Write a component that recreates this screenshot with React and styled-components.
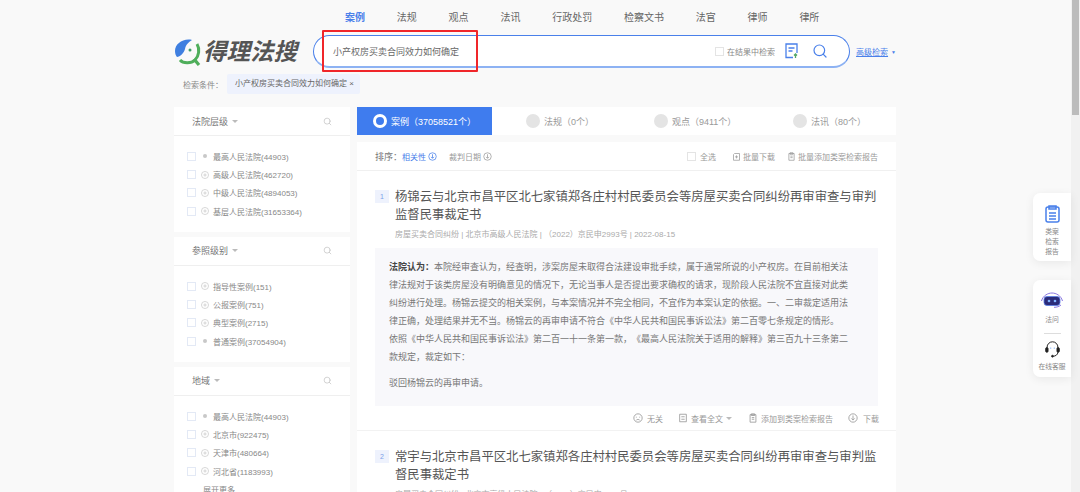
import React from "react";
import styled, { createGlobalStyle } from "styled-components";
import { Search } from "lucide-react";

const Global = createGlobalStyle`
  html, body {
    margin: 0;
    height: 492px;
    overflow: hidden;
    background: #f9f9f9;
    font-family: "Liberation Sans", "Noto Sans CJK SC", sans-serif;
    color: #666;
    text-spacing-trim: space-all;
  }
`;

const Page = styled.div`
  position: relative;
  width: 1080px;
  height: 492px;
  overflow: hidden;
`;

const Track = styled.div`
  position: absolute;
  right: 0;
  top: 0;
  width: 9px;
  height: 492px;
  background: #f1f1f1;
`;

const Thumb = styled.div`
  width: 7px;
  height: 115px;
  margin-left: 1px;
  background: #bcbcbc;
`;

const Inner = styled.div`
  width: 722px;
  margin-left: 174px;
`;

const Nav = styled.nav`
  display: flex;
  height: 35px;
  padding-left: 171px;
  gap: 31.8px;
  align-items: flex-start;
`;

const NavItem = styled.span`
  font-size: 10px;
  line-height: 36px;
  font-weight: ${(p) => (p.$on ? 700 : 400)};
  color: ${(p) => (p.$on ? "#4a80ea" : "#666")};
`;

const Head = styled.div`
  display: flex;
  align-items: center;
  height: 33px;
`;

const Logo = styled.div`
  display: flex;
  align-items: center;
  gap: 1px;
  width: 139px;
  flex: none;
`;

const LogoText = styled.span`
  font-size: 23.5px;
  line-height: 26px;
  font-weight: 700;
  font-style: italic;
  color: #555;
  white-space: nowrap;
`;

const SearchBar = styled.div`
  display: flex;
  align-items: center;
  box-sizing: border-box;
  width: 538px;
  height: 33px;
  padding: 0 21px 0 19px;
  background: #fff;
  border: 1px solid #4a80ea;
  border-bottom: 2px solid #8db2f3;
  border-radius: 17px;
`;

const Query = styled.span`
  font-size: 9px;
  color: #666;
  flex: 1;
`;

const SmallCheck = styled.i`
  display: block;
  box-sizing: border-box;
  width: 9px;
  height: 9px;
  border: 1px solid ${(p) => p.$c || "#e4e4e4"};
  flex: none;
`;

const InResult = styled.span`
  font-size: 8px;
  color: #888;
  margin: 0 10px 0 3px;
`;

const IconGap = styled.span`
  width: 14px;
`;

const Advanced = styled.a`
  margin-left: 6px;
  font-size: 8px;
  color: #4a80ea;
  text-decoration: underline;
  white-space: nowrap;
`;

const Tiny = styled.span`
  margin-left: 3px;
  font-size: 5px;
  color: #4a80ea;
`;

const Cond = styled.div`
  display: flex;
  align-items: center;
  height: 20px;
  margin-top: 6px;
  padding-left: 9px;
  font-size: 8px;
  color: #888;
`;

const Tag = styled.span`
  margin-left: 4px;
  padding: 0 6px 0 8px;
  height: 20px;
  line-height: 20px;
  background: #eef2fd;
  border-radius: 2px;
  color: #666;
  white-space: nowrap;
`;

const Body = styled.div`
  display: flex;
  gap: 7px;
  margin-top: 13px;
`;

const Side = styled.aside`
  width: 176px;
  flex: none;
`;

const Panel = styled.section`
  background: #fff;
  margin-bottom: 5px;
  padding-bottom: 11.4px;
`;

const PanelHead = styled.div`
  display: flex;
  align-items: center;
  height: 28px;
  padding: 0 18px;
  border-bottom: 1px solid #efefef;
  font-size: 9px;
  color: #777;
`;

const PanelTitle = styled.span`
  flex: 1;
  display: flex;
  align-items: center;
  gap: 4px;
`;

const Caret = styled.i`
  display: inline-block;
  width: 0;
  height: 0;
  border: 3px solid transparent;
  border-top: 3px solid #bbb;
  margin-top: 3px;
`;

const Rows = styled.ul`
  list-style: none;
  margin: 0;
  padding: 11px 0 0 13px;
`;

const Row = styled.li`
  display: flex;
  align-items: center;
  height: 18.4px;
  font-size: 8px;
  color: #888;
  white-space: nowrap;
`;

const Mark = styled.span`
  display: flex;
  align-items: center;
  justify-content: center;
  width: 8px;
  height: 8px;
  margin: 0 4px 0 5px;
  flex: none;
`;

const Dot = styled.i`
  display: block;
  width: 4px;
  height: 4px;
  border-radius: 50%;
  background: #c8c8c8;
`;

const More = styled.div`
  padding: 4px 0 0 29px;
  font-size: 8px;
  color: #888;
`;

const Main = styled.main`
  width: 539px;
  flex: none;
`;

const Tabs = styled.div`
  display: flex;
  height: 28px;
  background: #fff;
  margin-bottom: 7px;
`;

const Tab = styled.div`
  display: flex;
  align-items: center;
  gap: 4px;
  box-sizing: border-box;
  width: ${(p) => p.$w}px;
  padding-left: ${(p) => p.$pl}px;
  background: ${(p) => (p.$on ? "#3f7cee" : "#fff")};
  color: ${(p) => (p.$on ? "#fff" : "#999")};
  font-size: 9px;
  white-space: nowrap;
`;

const Radio = styled.i`
  display: block;
  box-sizing: border-box;
  width: 14px;
  height: 14px;
  border-radius: 50%;
  background: #e4e4e4;
  ${(p) => p.$on && "background: #3f7cee; border: 3.5px solid #fff;"}
`;

const SortBar = styled.div`
  display: flex;
  align-items: center;
  height: 28px;
  padding-left: 18px;
  background: #fff;
  border-bottom: 1px solid #f0f0f0;
  font-size: 8px;
  color: #999;
  white-space: nowrap;
`;

const SortLabel = styled.span`
  font-size: 9px;
  color: #777;
`;

const SortItem = styled.span`
  display: flex;
  align-items: center;
  gap: 2px;
  margin-right: 12px;
  color: ${(p) => (p.$on ? "#4a80ea" : "#999")};
`;

const Spacer = styled.span`
  flex: 1;
`;

const Tool = styled.span`
  display: flex;
  align-items: center;
  gap: ${(p) => p.$gap ?? 2}px;
  margin-right: ${(p) => p.$mr ?? 15}px;
  font-size: 8px;
  color: #999;
`;

const Result = styled.article`
  background: #fff;
  padding: 17px 17px 0 18px;
  border-bottom: ${(p) => (p.$last ? "none" : "1px solid #f2f2f2")};
`;

const TitleRow = styled.div`
  display: flex;
  gap: 6px;
`;

const Num = styled.span`
  display: block;
  flex: none;
  width: 14px;
  height: 13px;
  margin-top: 2px;
  background: #eef2fd;
  color: #7d9fe8;
  font-size: 7px;
  line-height: 13px;
  text-align: center;
`;

const Title = styled.h3`
  margin: 0;
  font-size: 12.35px;
  line-height: 18px;
  font-weight: 400;
  color: #555;
`;

const Meta = styled.div`
  margin: 4px 0 7px 20px;
  font-size: 8px;
  line-height: 13px;
  color: #aaa;
  white-space: nowrap;
`;

const Quote = styled.div`
  width: 503px;
  box-sizing: border-box;
  padding: 10px 14px 14px 14px;
  background: #f8f8fb;
  font-size: 9px;
  line-height: 18px;
  color: #777;
`;

const Para = styled.p`
  margin: 0;
  white-space: nowrap;
`;

const Verdict = styled.p`
  margin: 8px 0 0;
`;

const Lead = styled.b`
  color: #444;
`;

const Actions = styled.div`
  display: flex;
  justify-content: flex-end;
  align-items: center;
  height: 24px;
`;

const Float = styled.div`
  position: absolute;
  right: 9px;
  width: 38px;
  background: #fff;
  border-radius: 7px 0 0 7px;
  box-shadow: 0 2px 10px rgba(0, 0, 0, 0.07);
  display: flex;
  flex-direction: column;
  align-items: center;
  font-size: 6.8px;
  line-height: 10px;
  color: #888;
  text-align: center;
  top: ${(p) => p.$top}px;
  height: ${(p) => p.$h}px;
  padding-top: ${(p) => p.$pt}px;
  box-sizing: border-box;
`;

const FloatLabel = styled.span`
  margin-top: ${(p) => p.$mt || 0}px;
  white-space: nowrap;
`;

const FloatLine = styled.i`
  display: block;
  width: 17px;
  height: 1px;
  background: #ddd;
  margin: 8px 0 6px;
`;

const Highlight = styled.div`
  position: absolute;
  left: 322px;
  top: 30px;
  width: 156px;
  height: 42px;
  box-sizing: border-box;
  border: 2px solid #f0262a;
  border-radius: 1px;
`;

const Small = ({ d, s = 10 }) => (
  <svg width={s} height={s} viewBox="0 0 12 12" fill="none" stroke="#999" strokeWidth="1">
    <path d={d} />
  </svg>
);

const Circled = ({ c = "#999", s = 9 }) => (
  <svg width={s} height={s} viewBox="0 0 12 12" fill="none" stroke={c} strokeWidth="1">
    <circle cx="6" cy="6" r="5" />
    <path d="M6 3v5M4 6.500 6 8.500 8 6.500" />
  </svg>
);

const Plus = () => (
  <svg width="8" height="8" viewBox="0 0 12 12" fill="none" stroke="#c4c4c4" strokeWidth="1">
    <circle cx="6" cy="6" r="5.300" />
    <path d="M6 3.500v5M3.500 6h5" />
  </svg>
);

const Doc = ({ s }) => <Small s={s} d="M2.500 2h7v9h-7zM4 1h4v2H4zM4.500 5.500h3M4.500 7.500h3" />;

const LogoMark = () => (
  <svg width="28" height="28" viewBox="0 0 28 28" fill="none">
    <path d="M18 2C9 0 1 6 1 13c0 3 1 5 2 6 3 0 7-4 8-8 1-5 4-7 7-9z" fill="#3f7fe0" />
    <path d="M6 22c3 3.500 11 4 15 0 4-4 5-11 2-16" stroke="#4fae5b" strokeWidth="3" />
    <path d="M20 21l5 6" stroke="#4fae5b" strokeWidth="3.200" />
    <circle cx="16" cy="12" r="1.500" fill="#3f9c6a" />
  </svg>
);

const courts = [
  ["最高人民法院(44903)", true],
  ["高级人民法院(462720)"],
  ["中级人民法院(4894053)"],
  ["基层人民法院(31653364)"],
];
const refs = [
  ["指导性案例(151)"],
  ["公报案例(751)"],
  ["典型案例(2715)"],
  ["普通案例(37054904)", true],
];
const areas = [
  ["最高人民法院(44903)", true],
  ["北京市(922475)"],
  ["天津市(480664)"],
  ["河北省(1183993)"],
];

function Filter({ title, rows, more }) {
  return (
    <Panel>
      <PanelHead>
        <PanelTitle>
          {title}
          <Caret />
        </PanelTitle>
        <Search size={9} color="#c4c4c4" />
      </PanelHead>
      <Rows>
        {rows.map(([label, dot]) => (
          <Row key={label}>
            <SmallCheck $c="#e3e9f5" />
            <Mark>{dot ? <Dot /> : <Plus />}</Mark>
            {label}
          </Row>
        ))}
      </Rows>
      {more && <More>{more}</More>}
    </Panel>
  );
}

export default function App() {
  return (
    <Page>
      <Global />
      <Inner>
        <Nav>
          <NavItem $on>案例</NavItem>
          <NavItem>法规</NavItem>
          <NavItem>观点</NavItem>
          <NavItem>法讯</NavItem>
          <NavItem>行政处罚</NavItem>
          <NavItem>检察文书</NavItem>
          <NavItem>法官</NavItem>
          <NavItem>律师</NavItem>
          <NavItem>律所</NavItem>
        </Nav>
        <Head>
          <Logo>
            <LogoMark />
            <LogoText>得理法搜</LogoText>
          </Logo>
          <SearchBar>
            <Query>小产权房买卖合同效力如何确定</Query>
            <SmallCheck />
            <InResult>在结果中检索</InResult>
            <svg width="13" height="16" viewBox="0 0 13 16" fill="none" stroke="#4a80ea" strokeWidth="1.300">
              <path d="M8 14.500H1V1h11v9" />
              <path d="M3.500 5h6M3.500 8h4" />
              <path d="M10.500 15V11M9 12.500l1.500-1.500 1.500 1.500" stroke="#55a868" />
            </svg>
            <IconGap />
            <Search size={16} color="#4a80ea" strokeWidth={1.800} />
          </SearchBar>
          <Advanced>高级检索</Advanced>
          <Tiny>▼</Tiny>
        </Head>
        <Cond>
          检索条件：
          <Tag>小产权房买卖合同效力如何确定 ×</Tag>
        </Cond>
        <Body>
          <Side>
            <Filter title="法院层级" rows={courts} />
            <Filter title="参照级别" rows={refs} />
            <Filter title="地域" rows={areas} more="展开更多" />
          </Side>
          <Main>
            <Tabs>
              <Tab $on $w={135} $pl={16}>
                <Radio $on />
                案例（37058521个）
              </Tab>
              <Tab $w={131} $pl={34}>
                <Radio />
                法规（0个）
              </Tab>
              <Tab $w={130} $pl={31}>
                <Radio />
                观点（9411个）
              </Tab>
              <Tab $w={143} $pl={40}>
                <Radio />
                法讯（80个）
              </Tab>
            </Tabs>
            <SortBar>
              <SortLabel>排序：</SortLabel>
              <SortItem $on>
                相关性 <Circled c="#4a80ea" />
              </SortItem>
              <SortItem>
                裁判日期 <Circled />
              </SortItem>
              <Spacer />
              <Tool $mr={16}>
                <SmallCheck />
                &nbsp;全选
              </Tool>
              <Tool $mr={12}>
                <Small s={9} d="M3 2h7v9H2V3M6 4.500v4M4 6.500h4" />
                批量下载
              </Tool>
              <Tool $mr={18}>
                <Doc s={9} />
                批量添加类案检索报告
              </Tool>
            </SortBar>
            <Result>
              <TitleRow>
                <Num>1</Num>
                <Title>杨锦云与北京市昌平区北七家镇郑各庄村村民委员会等房屋买卖合同纠纷再审审查与审判监督民事裁定书</Title>
              </TitleRow>
              <Meta>房屋买卖合同纠纷 | 北京市高级人民法院 | （2022）京民申2993号 | 2022-08-15</Meta>
              <Quote>
                <Para>
                  <Lead>法院认为：</Lead>本院经审查认为，经查明，涉案房屋未取得合法建设审批手续，属于通常所说的小产权房。在目前相关法
                </Para>
                <Para>律法规对于该类房屋没有明确意见的情况下，无论当事人是否提出要求确权的请求，现阶段人民法院不宜直接对此类</Para>
                <Para>纠纷进行处理。杨锦云提交的相关案例，与本案情况并不完全相同，不宜作为本案认定的依据。一、二审裁定适用法</Para>
                <Para>律正确，处理结果并无不当。杨锦云的再审申请不符合《中华人民共和国民事诉讼法》第二百零七条规定的情形。</Para>
                <Para>依照《中华人民共和国民事诉讼法》第二百一十一条第一款，《最高人民法院关于适用的解释》第三百九十三条第二</Para>
                <Para>款规定，裁定如下：</Para>
                <Verdict>驳回杨锦云的再审申请。</Verdict>
              </Quote>
              <Actions>
                <Tool $gap={4}>
                  <Small d="M6 1a5 5 0 1 0 0 10A5 5 0 0 0 6 1zM4 8.500c1-1 3-1 4 0M4 4.500v1M8 4.500v1" />
                  无关
                </Tool>
                <Tool $gap={3} $mr={16}>
                  <Small d="M2 1.500h8v9H2zM4 4.500h4M4 7.500h4" />
                  查看全文
                  <Caret />
                </Tool>
                <Tool $gap={3}>
                  <Doc />
                  添加到类案检索报告
                </Tool>
                <Tool $gap={5} $mr={0}>
                  <Circled s={10} />
                  下载
                </Tool>
              </Actions>
            </Result>
            <Result $last>
              <TitleRow>
                <Num>2</Num>
                <Title>常宇与北京市昌平区北七家镇郑各庄村村民委员会等房屋买卖合同纠纷再审审查与审判监督民事裁定书</Title>
              </TitleRow>
              <Meta>房屋买卖合同纠纷 | 北京市高级人民法院 | （2022）京民申2994号 | 2022-08-15</Meta>
            </Result>
          </Main>
        </Body>
      </Inner>
      <Highlight />
      <Track>
        <Thumb />
      </Track>
      <Float $top={193} $h={68} $pt={12}>
        <svg width="15" height="18" viewBox="0 0 15 18" fill="none" stroke="#4a80ea" strokeWidth="1.500">
          <rect x="1" y="2" width="13" height="15" rx="2" />
          <path d="M4 1h7v3H4zM4 8h7M4 11h7M4 14h7" />
        </svg>
        <FloatLabel $mt={4}>类案</FloatLabel>
        <FloatLabel>检索</FloatLabel>
        <FloatLabel>报告</FloatLabel>
      </Float>
      <Float $top={280} $h={97} $pt={12}>
        <svg width="24" height="16" viewBox="0 0 24 16" fill="none">
          <path d="M1.500 9C3 3.500 8 1 12 1s9 2.500 10.500 8M21 13c-2 1.500-4 2.300-7 2.300" stroke="#8a76e0" strokeWidth="1" />
          <rect x="4" y="4.500" width="16" height="9" rx="3" fill="#2b2b78" stroke="#5a7fe8" strokeWidth="0.800" />
          <circle cx="9" cy="9" r="1.300" fill="#7fb2ff" />
          <circle cx="15" cy="9" r="1.300" fill="#7fb2ff" />
        </svg>
        <FloatLabel $mt={7}>法问</FloatLabel>
        <FloatLine />
        <svg width="17" height="18" viewBox="0 0 18 20" fill="none" stroke="#222" strokeWidth="1.100">
          <path d="M3 10V8a6 6 0 0 1 12 0v2" />
          <rect x="1.500" y="8.500" width="2.500" height="5" rx="1" fill="#222" />
          <rect x="14" y="8.500" width="2.500" height="5" rx="1" fill="#222" />
          <path d="M15 13.500c0 3-3 4.500-5 4.500" />
          <circle cx="9" cy="18" r="1" fill="#222" />
          <circle cx="7" cy="9" r="0.800" fill="#7fb2ff" stroke="none" />
          <circle cx="11" cy="9" r="0.800" fill="#7fb2ff" stroke="none" />
        </svg>
        <FloatLabel $mt={4}>在线客服</FloatLabel>
      </Float>
    </Page>
  );
}
